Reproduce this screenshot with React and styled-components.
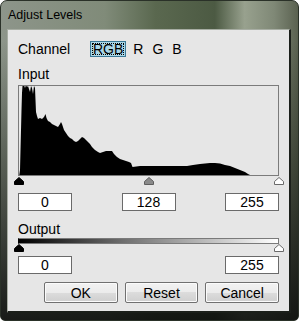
import styled, { createGlobalStyle } from "styled-components";

const GlobalStyle = createGlobalStyle`
  html, body {
    margin: 0;
    padding: 0;
    background: #ffffff;
  }
  body {
    font-family: "Liberation Sans", Arial, sans-serif;
  }
`;

// histogram outline, in page pixels (box content starts at 19,86)
const HIST_POINTS = [
  [19.3, 175], [20, 170], [20.5, 150], [21, 130], [21.5, 110], [22, 93], [22.5, 86],
  [24, 85], [25, 88], [26, 85], [27, 87], [28, 86], [29, 89], [30, 92], [31, 86],
  [32, 88], [33, 94], [34, 86], [35, 88], [35.5, 100], [36, 112], [37, 116],
  [38, 119], [40, 118], [42, 119], [44, 117], [45.5, 114], [46.5, 118], [48, 121],
  [50, 122], [52, 124], [54, 125], [56, 126], [58, 127], [60, 124], [61, 122],
  [62, 124], [64, 130], [66, 133], [68, 136], [70, 138], [72, 139], [74, 141],
  [76, 142], [78, 141], [80, 139], [82, 137], [84, 138], [86, 140], [88, 142],
  [90, 144], [92, 147], [95, 150], [98, 152], [100, 153], [103, 152], [106, 151],
  [109, 151], [112, 151], [114, 154], [117, 157], [120, 159], [123, 160],
  [126, 161], [129, 162], [131, 163], [132.5, 167], [140, 166], [160, 166],
  [187, 166], [193, 165], [200, 164], [205, 163.5], [210, 163], [215, 163],
  [220, 163.5], [225, 165], [230, 166], [235, 168], [240, 170], [245, 172],
  [248, 174], [250, 175],
];

const histPath = HIST_POINTS.map(([x, y]) => `${(x - 19).toFixed(1)},${y - 86}`).join(" ");

const Window = styled.div`
  width: 299px;
  height: 321px;
  box-sizing: border-box;
  border: 1px solid #2a3128;
  border-radius: 7px 7px 5px 5px;
  display: flex;
  flex-direction: column;
  overflow: hidden;
  background:
    linear-gradient(180deg, rgba(0, 0, 0, 0) 0px, rgba(0, 0, 0, 0) 40px, rgba(25, 30, 22, 0.45) 160px, rgba(12, 14, 12, 0.9) 100%),
    linear-gradient(90deg, #8d958a 0%, #808b79 35%, #5a684f 52%, #4c5a43 72%, #98a18e 82%, #7f8876 92%, #5a6150 100%);
`;

const TitleBar = styled.div`
  height: 28px;
  line-height: 28px;
  padding-left: 7px;
  font-size: 12.5px;
  color: #000;
`;

const Client = styled.div`
  margin-left: 6px;
  width: 284px;
  height: 284px;
  box-sizing: border-box;
  background: #e6e6e6;
  border-left: 1px solid #a7ada3;
  border-top: 1px solid #a7ada3;
  border-right: 2px solid #1b1f1a;
  border-bottom: 2px solid #1b1f1a;
  padding: 11px 10px 0 10px;
  display: flex;
  flex-direction: column;
  font-size: 14px;
  color: #000;
`;

const ChannelRow = styled.div`
  display: flex;
  align-items: center;
  height: 16px;
`;

const ChannelLabel = styled.span`
  width: 72px;
  line-height: 16px;
`;

const ChannelOption = styled.span`
  position: relative;
  box-sizing: border-box;
  height: 16px;
  line-height: 14px;
  padding: 0 2px 0 2px;
  margin-right: ${(p) => (p.$selected ? "4px" : "3px")};
  border: 1px solid ${(p) => (p.$selected ? "#3a7896" : "transparent")};
  background: ${(p) => (p.$selected ? "#abd7e7" : "transparent")};

  &::after {
    content: "";
    display: ${(p) => (p.$selected ? "block" : "none")};
    position: absolute;
    inset: 1px;
    border: 1px dotted #000;
  }
`;

const Label = styled.div`
  line-height: 16px;
  margin-top: ${(p) => p.$top}px;
`;

const Histogram = styled.div`
  margin-top: 3px;
  width: 261px;
  height: 91px;
  box-sizing: border-box;
  border: 1px solid #7b7b7b;

  svg {
    display: block;
  }
`;

const Track = styled.div`
  position: relative;
  width: 261px;
  height: 8px;
  margin-top: ${(p) => p.$top}px;
`;

const ThumbBox = styled.svg`
  position: absolute;
  top: 0;
  width: 10px;
  height: 8px;
`;

const thumbColors = {
  black: ["#000", "#000"],
  gray: ["#8a8a8a", "#5e5e5e"],
  white: ["#fff", "#6a6a6a"],
};

const Thumb = ({ kind, value }) => {
  const [fill, stroke] = thumbColors[kind];
  const center = 0.8 + (value / 255) * 260;
  return (
    <ThumbBox viewBox="0 0 10 8" style={{ left: `${center - 5}px` }}>
      <polygon points="5,0.5 9.5,4.5 9.5,7.5 0.5,7.5 0.5,4.5" fill={fill} stroke={stroke} strokeWidth="1" />
    </ThumbBox>
  );
};

const FieldRow = styled.div`
  display: flex;
  justify-content: space-between;
  width: 261px;
  margin-top: ${(p) => p.$top}px;
`;

const Field = styled.div`
  width: 54px;
  height: 18px;
  box-sizing: border-box;
  border: 1px solid #6a6a6a;
  background: #fff;
  text-align: center;
  line-height: 16px;
  font-size: 14px;
`;

const GradientBar = styled.div`
  margin-top: 1px;
  width: 261px;
  height: 6px;
  box-sizing: border-box;
  border: 1px solid #7a7a7a;
  border-left-color: #000;
  background: linear-gradient(90deg, #000 0%, #6e6e6e 40%, #fff 100%);
`;

const ButtonRow = styled.div`
  display: flex;
  gap: 7px;
  padding-left: 26px;
  margin-top: 8px;
`;

const Button = styled.button`
  width: 74px;
  height: 21px;
  box-sizing: border-box;
  padding: 0;
  border: 1px solid #707070;
  border-radius: 2px;
  background: linear-gradient(180deg, #f2f2f2 0%, #ebebeb 50%, #dcdcdc 50%, #cfcfcf 100%);
  box-shadow: inset 0 0 0 1px #fbfbfb;
  font-family: "Liberation Sans", Arial, sans-serif;
  font-size: 14px;
  line-height: 18px;
  color: #000;
`;

export default function App() {
  return (
    <>
      <GlobalStyle />
      <Window>
        <TitleBar>Adjust Levels</TitleBar>
        <Client>
          <ChannelRow>
            <ChannelLabel>Channel</ChannelLabel>
            <ChannelOption $selected>RGB</ChannelOption>
            <ChannelOption>R</ChannelOption>
            <ChannelOption>G</ChannelOption>
            <ChannelOption>B</ChannelOption>
          </ChannelRow>

          <Label $top={9}>Input</Label>
          <Histogram>
            <svg width="259" height="89" viewBox="0 0 259 89">
              <polygon points={histPath} fill="#000" />
            </svg>
          </Histogram>
          <Track $top={1}>
            <Thumb kind="black" value={0} />
            <Thumb kind="gray" value={128} />
            <Thumb kind="white" value={255} />
          </Track>
          <FieldRow $top={8}>
            <Field>0</Field>
            <Field>128</Field>
            <Field>255</Field>
          </FieldRow>

          <Label $top={10}>Output</Label>
          <GradientBar />
          <Track $top={0}>
            <Thumb kind="black" value={0} />
            <Thumb kind="white" value={255} />
          </Track>
          <FieldRow $top={4}>
            <Field>0</Field>
            <Field>255</Field>
          </FieldRow>

          <ButtonRow>
            <Button>OK</Button>
            <Button>Reset</Button>
            <Button>Cancel</Button>
          </ButtonRow>
        </Client>
      </Window>
    </>
  );
}
